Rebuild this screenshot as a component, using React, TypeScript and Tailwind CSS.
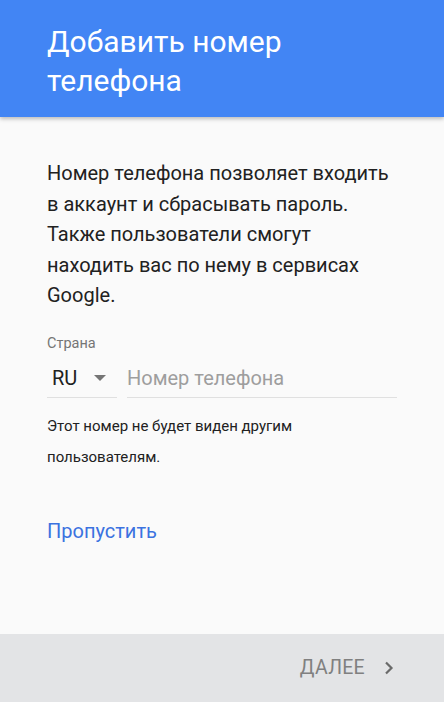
import React from "react";

export default function App() {
  return (
    <div className="flex h-[702px] w-[444px] flex-col bg-[#fafafa] font-['Roboto',sans-serif]">
      <header className="z-10 h-[117px] bg-[#4285f4] pl-[47px] pt-[22px] shadow-[0_2px_4px_rgba(0,0,0,0.25)]">
        <h1 className="text-[30px] leading-[39px] font-normal text-white">
          Добавить номер
          <br />
          телефона
        </h1>
      </header>

      <main className="flex-1 px-[47px] pt-[41px]">
        <p className="text-[20px] leading-[30.5px] text-[#212121]">
          Номер телефона позволяет входить в аккаунт и сбрасывать пароль.
          Также пользователи смогут находить вас по нему в сервисах Google.
        </p>

        <div className="mt-[24px] text-[14.5px] leading-[18px] text-[#757575]">Страна</div>
        <div className="mt-[7px] flex items-end gap-[10px]">
          <div className="flex h-[38px] w-[70px] items-center border-b border-[#e0e0e0] pl-[5px]">
            <span className="text-[20px] text-[#212121]">RU</span>
            <svg className="ml-[17px]" width="12" height="6" viewBox="0 0 12 6">
              <path d="M0 0h12L6 6z" fill="#757575" />
            </svg>
          </div>
          <div className="flex h-[38px] flex-1 items-center border-b border-[#e0e0e0]">
            <span className="text-[20px] text-[#9e9e9e]">Номер телефона</span>
          </div>
        </div>

        <p className="mt-[13px] text-[15px] leading-[31px] text-[#212121]">
          Этот номер не будет виден другим
          <br />
          пользователям.
        </p>

        <button className="mt-[46px] text-[20px] leading-[24px] text-[#3b72e0]">Пропустить</button>
      </main>

      <footer className="flex h-[68px] items-center justify-end bg-[#e3e4e6] pr-[50px]">
        <span className="text-[19.5px] tracking-[0.3px] text-[#808080]">ДАЛЕЕ</span>
        <svg className="ml-[19px]" width="10" height="14" viewBox="0 0 10 14">
          <path d="M2 1.5l5.5 5.5L2 12.5" fill="none" stroke="#6a6a6a" strokeWidth="2.2" />
        </svg>
      </footer>
    </div>
  );
}
